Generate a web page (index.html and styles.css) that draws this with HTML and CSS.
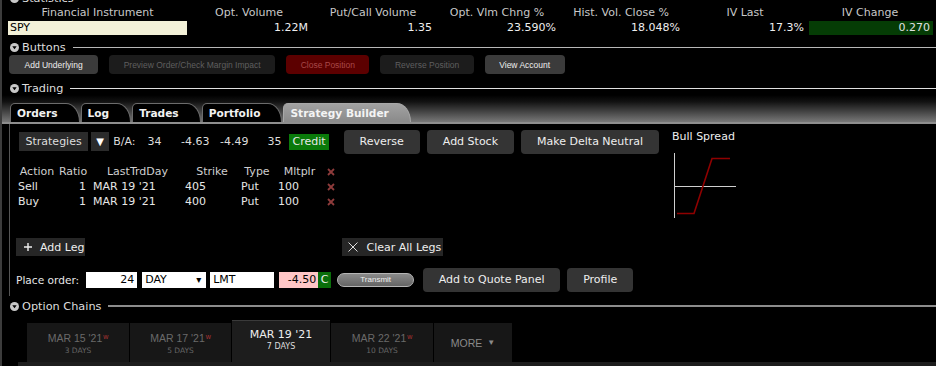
FILE: index.html
```html
<!DOCTYPE html>
<html lang="en">
<head>
  <meta charset="UTF-8">
  <meta name="viewport" content="width=device-width, initial-scale=1.0">
  <title>Strategy Builder</title>
  <link rel="stylesheet" href="styles.css">
</head>
<body>
  <div class="app">

    <div class="section-head stats-head">
      <svg class="toggle" width="9" height="9" viewBox="0 0 9 9"><circle cx="4.5" cy="4.5" r="4.5" fill="#c8c8c8"/><path d="M2.3 3.3h4.4L4.5 6.2z" fill="#000"/></svg>
      <span>Statistics</span>
    </div>
    <div class="stats">
      <div class="stat-label">Financial Instrument</div>
      <div class="stat-label">Opt. Volume</div>
      <div class="stat-label">Put/Call Volume</div>
      <div class="stat-label">Opt. Vlm Chng %</div>
      <div class="stat-label">Hist. Vol. Close %</div>
      <div class="stat-label">IV Last</div>
      <div class="stat-label">IV Change</div>
      <div class="stat-value instrument">SPY</div>
      <div class="stat-value">1.22M</div>
      <div class="stat-value">1.35</div>
      <div class="stat-value">23.590%</div>
      <div class="stat-value">18.048%</div>
      <div class="stat-value">17.3%</div>
      <div class="stat-value up">0.270</div>
    </div>

    <div class="section-head buttons-head">
      <svg class="toggle" width="9" height="9" viewBox="0 0 9 9"><circle cx="4.5" cy="4.5" r="4.5" fill="#c8c8c8"/><path d="M2.3 3.3h4.4L4.5 6.2z" fill="#000"/></svg>
      <span>Buttons</span>
    </div>
    <div class="button-bar">
      <div class="tool-btn on">Add Underlying</div>
      <div class="tool-btn">Preview Order/Check Margin Impact</div>
      <div class="tool-btn danger">Close Position</div>
      <div class="tool-btn">Reverse Position</div>
      <div class="tool-btn on">View Account</div>
    </div>

    <div class="section-head trading-head">
      <svg class="toggle" width="9" height="9" viewBox="0 0 9 9"><circle cx="4.5" cy="4.5" r="4.5" fill="#c8c8c8"/><path d="M2.3 3.3h4.4L4.5 6.2z" fill="#000"/></svg>
      <span>Trading</span>
    </div>
    <div class="tab-bar">
      <div class="tab">Orders</div>
      <div class="tab">Log</div>
      <div class="tab">Trades</div>
      <div class="tab">Portfolio</div>
      <div class="tab active">Strategy Builder</div>
    </div>

    <div class="builder">
      <div class="builder-main">
        <div class="strategy-row">
          <div class="select-btn">Strategies</div>
          <div class="drop-btn">&#9660;</div>
          <span class="ba-label">B/A:</span>
          <span class="ba-num w26">34</span>
          <span class="ba-num w48">-4.63</span>
          <span class="ba-num w39">-4.49</span>
          <span class="ba-num w33">35</span>
          <span class="tag-credit">Credit</span>
          <div class="action-btn first">Reverse</div>
          <div class="action-btn">Add Stock</div>
          <div class="action-btn">Make Delta Neutral</div>
        </div>

        <div class="legs">
          <div class="leg-line leg-head">
            <span>Action</span>
            <span>Ratio</span>
            <span>LastTrdDay</span>
            <span>Strike</span>
            <span>Type</span>
            <span>Mltplr</span>
            <span class="del"><svg width="8" height="8" viewBox="0 0 8 8"><path d="M1 1l6 6M7 1l-6 6" stroke="#8e3b3b" stroke-width="1.8"/></svg></span>
          </div>
          <div class="leg-line">
            <span class="action">Sell</span>
            <span class="ratio">1</span>
            <span class="date">MAR 19 '21</span>
            <span class="strike">405</span>
            <span class="type">Put</span>
            <span class="mult">100</span>
            <span class="del"><svg width="8" height="8" viewBox="0 0 8 8"><path d="M1 1l6 6M7 1l-6 6" stroke="#8e3b3b" stroke-width="1.8"/></svg></span>
          </div>
          <div class="leg-line">
            <span class="action">Buy</span>
            <span class="ratio">1</span>
            <span class="date">MAR 19 '21</span>
            <span class="strike">400</span>
            <span class="type">Put</span>
            <span class="mult">100</span>
            <span class="del"><svg width="8" height="8" viewBox="0 0 8 8"><path d="M1 1l6 6M7 1l-6 6" stroke="#8e3b3b" stroke-width="1.8"/></svg></span>
          </div>
        </div>

        <div class="leg-row">
          <div class="flat-btn add-leg">
            <svg width="8" height="8" viewBox="0 0 8 8"><path d="M4 0v8M0 4h8" stroke="#eee" stroke-width="1.4"/></svg>
            <span>Add Leg</span>
          </div>
          <div class="flat-btn clear-legs">
            <svg width="10" height="10" viewBox="0 0 10 10"><path d="M0.5 0.5l9 9M9.5 0.5l-9 9" stroke="#ddd" stroke-width="1"/></svg>
            <span>Clear All Legs</span>
          </div>
        </div>

        <div class="order-row">
          <span class="order-label">Place order:</span>
          <span class="field qty">24</span>
          <span class="field tif">DAY<span class="caret">&#9662;</span></span>
          <span class="field otype">LMT</span>
          <span class="field price">-4.50</span>
          <span class="tag-c">C</span>
          <span class="transmit">Transmit</span>
          <div class="action-btn quote">Add to Quote Panel</div>
          <div class="action-btn">Profile</div>
        </div>
      </div>

      <div class="builder-chart">
        <div class="chart-title">Bull Spread</div>
        <svg class="payoff" width="68" height="70" viewBox="0 0 68 70">
          <path d="M2.5 3v65" stroke="#cfcfcf" stroke-width="1"/>
          <path d="M2 36.5h62" stroke="#cfcfcf" stroke-width="1"/>
          <path d="M5 63.5h17l18-55h18" fill="none" stroke="#8f0000" stroke-width="1.6"/>
        </svg>
      </div>
    </div>

    <div class="section-head chains-head">
      <svg class="toggle" width="9" height="9" viewBox="0 0 9 9"><circle cx="4.5" cy="4.5" r="4.5" fill="#c8c8c8"/><path d="M2.3 3.3h4.4L4.5 6.2z" fill="#000"/></svg>
      <span>Option Chains</span>
    </div>
    <div class="chain-tabs">
      <div class="chain-tab">
        <div class="chain-date">MAR 15 '21<sup>w</sup></div>
        <div class="chain-days">3 DAYS</div>
      </div>
      <div class="chain-tab">
        <div class="chain-date">MAR 17 '21<sup>w</sup></div>
        <div class="chain-days">5 DAYS</div>
      </div>
      <div class="chain-tab active">
        <div class="chain-date">MAR 19 '21</div>
        <div class="chain-days">7 DAYS</div>
      </div>
      <div class="chain-tab">
        <div class="chain-date">MAR 22 '21<sup>w</sup></div>
        <div class="chain-days">10 DAYS</div>
      </div>
      <div class="chain-tab more">MORE <span class="more-caret">&#9660;</span></div>
    </div>
    <div class="chain-body"></div>

  </div>
</body>
</html>
```

FILE: styles.css
```css
* {
  box-sizing: border-box;
}

body {
  margin: 0;
  background-color: #000;
  color: #ddd;
  font-family: "DejaVu Sans", sans-serif;
  font-size: 11px;
  overflow: hidden;
}

.app {
  border-left: 2px solid #3c3c3c;
  min-height: 366px;
}

/* section headers */
.section-head {
  display: flex;
  align-items: center;
  height: 14px;
  padding-left: 8px;
  gap: 3px;
  color: #ddd;
  font-size: 11.3px;
}

.section-head::after {
  content: "";
  flex: 1;
  height: 1px;
  margin-left: 4px;
  background-color: #b8b8b8;
}

.toggle {
  flex-shrink: 0;
}

.stats-head {
  margin-top: -9px;
}

.buttons-head {
  margin-top: 5px;
}

.trading-head {
  margin-top: 7px;
}

.trading-head::after {
  background-color: #e0e0e0;
}

.chains-head {
  margin-top: 3px;
}

.chains-head::after {
  height: 2px;
  background-color: #8c8c8c;
}

/* statistics */
.stats {
  display: grid;
  grid-template-columns: 179px repeat(5, 124px) 126px;
  row-gap: 1px;
  margin: 1px 0 0 6px;
}

.stat-label {
  height: 14px;
  line-height: 14px;
  text-align: center;
  color: #c8c8c8;
}

.stat-value {
  height: 14px;
  line-height: 14px;
  text-align: right;
  padding-right: 3px;
  color: #eee;
}

.stat-value.instrument {
  background-color: #f3f1d8;
  color: #000;
  text-align: left;
  padding-left: 2px;
}

.stat-value.up {
  background-color: #053c05;
  margin-left: 2px;
  color: #e0e0e0;
}

/* buttons panel */
.button-bar {
  display: flex;
  gap: 11px;
  margin: 1px 0 0 7px;
}

.tool-btn {
  height: 19px;
  padding: 0 14.5px;
  border-radius: 4px;
  display: flex;
  align-items: center;
  font-family: "Liberation Sans", sans-serif;
  font-size: 8.5px;
  background-color: #1c1c1c;
  color: #5f5f5f;
}

.tool-btn.on {
  background-color: #3b3b3b;
  color: #eee;
}

.tool-btn.on:first-child {
  padding: 0 15.5px;
}

.tool-btn.danger {
  background-color: #5c0000;
  color: #a84848;
}

/* trading tabs */
.tab-bar {
  display: flex;
  align-items: flex-end;
  height: 29px;
  padding-left: 8px;
  background: linear-gradient(#000 0%, #121212 25%, #787878 100%);
  border-bottom: 2px solid #8e8e8e;
}

.tab {
  height: 19px;
  line-height: 18px;
  padding: 0 21px 0 6px;
  margin-right: 1px;
  border: 1px solid #6c6c6c;
  border-bottom: none;
  border-radius: 5px 14px 0 0 / 5px 19px 0 0;
  background-color: #000;
  color: #f2f2f2;
  font-size: 10.6px;
  font-weight: bold;
}

.tab.active {
  background: linear-gradient(#a2a2a2, #8a8a8a);
  border-color: #a8a8a8;
  color: #f4f4f4;
}

/* strategy builder */
.builder {
  display: grid;
  grid-template-columns: 662px 1fr;
  margin-left: 7px;
  padding: 5px 0 4px;
  border-left: 1px solid #555;
}

.builder-main {
  padding-left: 6px;
}

.strategy-row {
  display: flex;
  align-items: center;
  height: 25px;
}

.select-btn {
  height: 19px;
  line-height: 19px;
  margin-left: 3px;
  padding: 0 6.5px;
  background-color: #2b2b2b;
  color: #ddd;
}

.drop-btn {
  width: 18px;
  height: 19px;
  line-height: 19px;
  margin-left: 3px;
  text-align: center;
  background-color: #2b2b2b;
  color: #fff;
  font-size: 10px;
}

.ba-label {
  margin-left: 4px;
}

.ba-num {
  text-align: right;
}

.w26 { width: 26px; }
.w48 { width: 48px; }
.w39 { width: 39px; }
.w33 { width: 33px; }

.tag-credit {
  height: 16px;
  line-height: 16px;
  margin-left: 8px;
  padding: 0 3px;
  background-color: #0a7a0a;
  color: #e8e8e8;
}

.action-btn {
  height: 24px;
  line-height: 24px;
  margin-left: 7px;
  padding: 0 16px;
  border-radius: 4px;
  background-color: #343434;
  color: #eee;
}

.action-btn.first {
  margin-left: 15px;
}

.legs {
  margin: 11px 0 0 1px;
}

.leg-line {
  display: grid;
  grid-template-columns: 40px 32px 97px 52px 38px 47px 16px;
  height: 15px;
  line-height: 15px;
  color: #e6e6e6;
}

.leg-head {
  height: 14px;
  line-height: 14px;
  text-align: center;
  color: #cfcfcf;
}

.leg-line .action { padding-left: 1px; }
.leg-line .ratio { text-align: right; padding-right: 3px; }
.leg-line .date { padding-left: 4px; }
.leg-line .strike { margin-left: -1px; }
.leg-line .type { padding-left: 3px; }
.leg-line .mult { padding-left: 2px; }

.del {
  display: flex;
  align-items: center;
  justify-content: center;
}

.leg-row {
  display: flex;
  margin-top: 29px;
}

.flat-btn {
  display: flex;
  align-items: center;
  height: 18px;
  background-color: #262626;
  color: #eee;
}

.add-leg {
  gap: 8px;
  padding: 0 1px 0 8px;
}

.clear-legs {
  gap: 8px;
  margin-left: 257px;
  padding: 0 2px 0 6px;
}

.order-row {
  display: flex;
  align-items: center;
  height: 25px;
  margin-top: 11px;
}

.order-label {
  font-size: 10.6px;
  color: #e6e6e6;
}

.field {
  height: 16px;
  line-height: 16px;
  padding: 0 3px;
  background-color: #fff;
  color: #000;
}

.qty {
  width: 51px;
  margin-left: 7px;
  text-align: right;
}

.tif {
  display: flex;
  justify-content: space-between;
  width: 64px;
  margin-left: 5px;
}

.caret {
  font-size: 10px;
  padding-right: 2px;
}

.otype {
  width: 64px;
  margin-left: 4px;
}

.price {
  width: 39px;
  margin-left: 5px;
  text-align: right;
  padding-right: 2px;
  background-color: #ffc6c6;
}

.tag-c {
  width: 13px;
  height: 16px;
  line-height: 16px;
  text-align: center;
  background-color: #0a6e0a;
  color: #f0f0f0;
}

.transmit {
  width: 77px;
  height: 14px;
  line-height: 12px;
  margin-left: 6px;
  border: 1px solid #b5b5b5;
  border-radius: 7px;
  text-align: center;
  background: linear-gradient(#8a8a8a, #646464);
  color: #eee;
  font-family: "Liberation Sans", sans-serif;
  font-size: 8px;
}

.action-btn.quote {
  margin-left: 9px;
  padding: 0 15.5px;
}

.builder-chart {
  padding-top: 1px;
}

.chart-title {
  line-height: 14px;
  color: #eee;
}

.payoff {
  display: block;
  margin-top: 6px;
}

/* option chains */
.chain-tabs {
  display: flex;
  align-items: flex-start;
  margin-top: 7px;
  padding-left: 25px;
}

.chain-tab {
  display: flex;
  flex-direction: column;
  align-items: center;
  justify-content: center;
  width: 102px;
  height: 39px;
  margin-top: 3px;
  margin-right: 1px;
  background-color: #171717;
  color: #6a6a6a;
}

.chain-tab:nth-child(2) {
  width: 101px;
}

.chain-date {
  font-family: "Liberation Sans", sans-serif;
  font-size: 10.5px;
  line-height: 13px;
}

.chain-date sup {
  font-size: 7px;
  color: #a33;
  vertical-align: 3px;
  margin-left: 1px;
}

.chain-days {
  font-size: 7.5px;
  line-height: 11px;
  color: #666;
}

.chain-tab.active {
  width: 98px;
  height: 42px;
  margin-top: 0;
  padding-bottom: 3px;
  border-top: 1px solid #3a3a3a;
  background-color: #1d1d1d;
}

.chain-tab.active .chain-date {
  font-family: "DejaVu Sans", sans-serif;
  font-size: 11px;
  color: #eee;
}

.chain-tab.active .chain-days {
  font-size: 8px;
  color: #ddd;
}

.chain-tab.more {
  flex-direction: row;
  gap: 5px;
  width: 78px;
  font-family: "Liberation Sans", sans-serif;
  font-size: 10.5px;
  color: #8a8a8a;
}

.more-caret {
  font-size: 8px;
}

.chain-body {
  height: 10px;
  margin-left: 16px;
  background-color: #1d1d1d;
}
```
